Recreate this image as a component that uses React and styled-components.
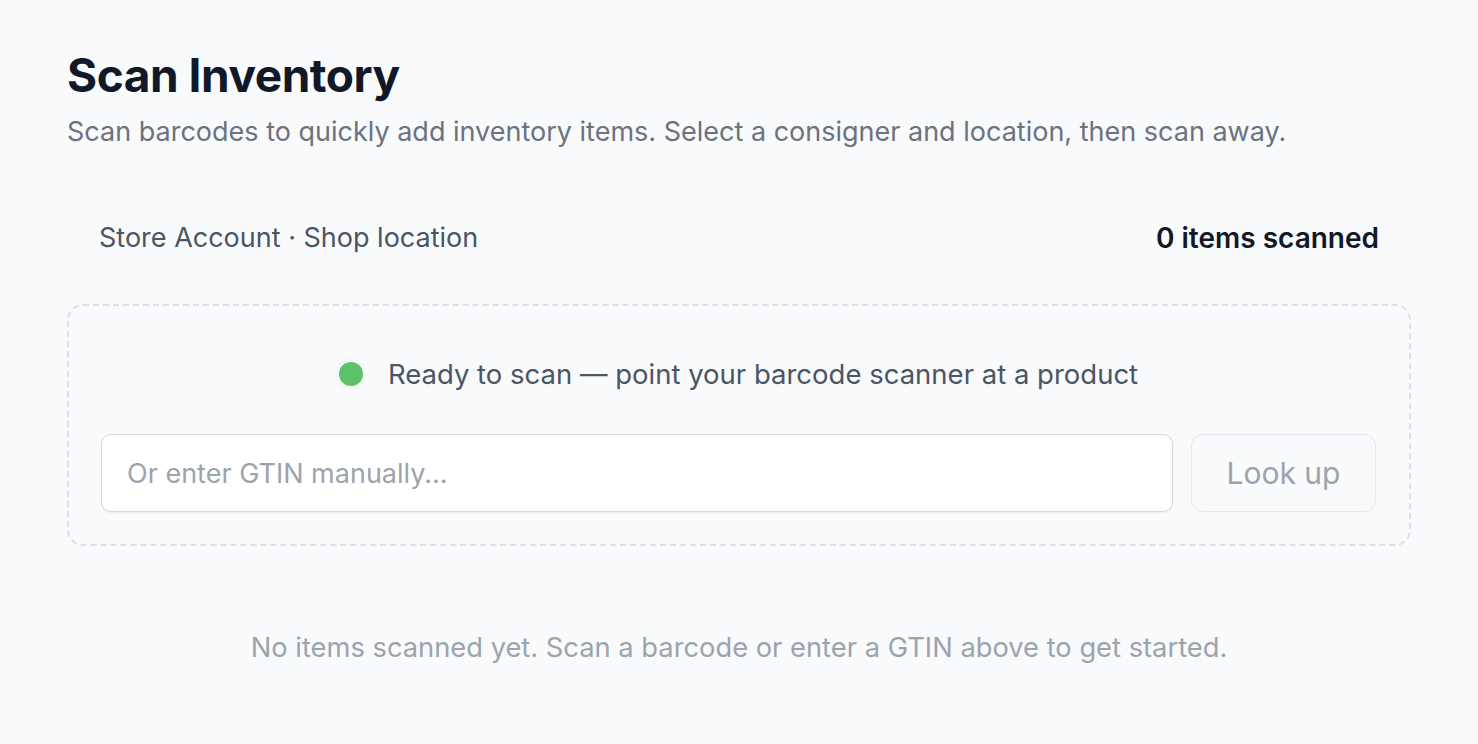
import React, { useState } from 'react';
import styled, { createGlobalStyle } from 'styled-components';

const GlobalStyle = createGlobalStyle`
	html, body {
		margin: 0;
		padding: 0;
		background: #f9fafb;
	}
	body {
		font-family: Inter, "Noto Sans", "Liberation Sans", sans-serif;
		-webkit-font-smoothing: antialiased;
	}
	* {
		box-sizing: border-box;
	}
`;

const Page = styled.div`
	min-height: 744px;
	padding: 44px 67px 40px 67px;
	background: #f9fafb;
`;

const Title = styled.h1`
	margin: 0;
	font-size: 46px;
	line-height: 62px;
	font-weight: 700;
	letter-spacing: -0.01em;
	color: #111827;
`;

const Subtitle = styled.p`
	margin: 8px 0 0 0;
	font-size: 27px;
	line-height: 36px;
	color: #6b7280;
`;

const MetaRow = styled.div`
	display: flex;
	justify-content: space-between;
	align-items: center;
	padding: 0 32px;
	margin-top: 70px;
	font-size: 27px;
	line-height: 36px;
`;

const MetaText = styled.span`
	color: ${props => (props.strong ? '#111827' : '#4b5563')};
	font-weight: ${props => (props.strong ? 600 : 400)};
	font-size: ${props => (props.strong ? '28px' : '27px')};
`;

const ScanBox = styled.div`
	margin-top: 48px;
	border: 2px dashed #dcdfe4;
	border-radius: 16px;
	padding: 32px 33px 32px 32px;
`;

const Status = styled.div`
	display: flex;
	justify-content: center;
	align-items: center;
	gap: 25px;
	padding: 16px 0;
	font-size: 27.5px;
	line-height: 40px;
	color: #4b5563;
`;

const Dot = styled.span`
	width: 24px;
	height: 24px;
	border-radius: 50%;
	background: ${props => (props.active ? '#5cc16b' : '#d1d5db')};
	box-shadow: 0 0 0 4px ${props => (props.active ? 'rgba(92, 193, 107, 0.04)' : 'transparent')};
`;

const EntryRow = styled.form`
	display: flex;
	gap: 18px;
	margin-top: 24px;
`;

const GtinInput = styled.input`
	flex: 1;
	height: 78px;
	padding: 0 25px;
	border: 1.5px solid #d4d7dc;
	border-radius: 10px;
	background: #ffffff;
	box-shadow: 0 1px 2px rgba(0, 0, 0, 0.06);
	font-family: inherit;
	font-size: 27px;
	color: #111827;
	outline: none;

	&::placeholder {
		color: #9ca3af;
	}
`;

const LookupButton = styled.button`
	width: 185px;
	height: 78px;
	border: 1.5px solid #e5e7eb;
	border-radius: 12px;
	background: #f9fafb;
	font-family: inherit;
	font-size: 30px;
	color: #9ca3af;
	cursor: default;
`;

const EmptyState = styled.p`
	margin: 84px 0 0 0;
	text-align: center;
	font-size: 27.3px;
	line-height: 36px;
	color: #9ca3af;
`;

export default function App() {
	const [gtin, setGtin] = useState('');
	const [items] = useState([]);

	return (
		<Page>
			<GlobalStyle />
			<Title>Scan Inventory</Title>
			<Subtitle>
				Scan barcodes to quickly add inventory items. Select a consigner and location, then scan away.
			</Subtitle>
			<MetaRow>
				<MetaText>Store Account · Shop location</MetaText>
				<MetaText strong>{items.length} items scanned</MetaText>
			</MetaRow>
			<ScanBox>
				<Status>
					<Dot active />
					Ready to scan — point your barcode scanner at a product
				</Status>
				<EntryRow onSubmit={e => e.preventDefault()}>
					<GtinInput
						value={gtin}
						onChange={e => setGtin(e.target.value)}
						placeholder="Or enter GTIN manually..."
					/>
					<LookupButton type="submit" disabled={!gtin}>Look up</LookupButton>
				</EntryRow>
			</ScanBox>
			{items.length === 0 && (
				<EmptyState>No items scanned yet. Scan a barcode or enter a GTIN above to get started.</EmptyState>
			)}
		</Page>
	);
}
